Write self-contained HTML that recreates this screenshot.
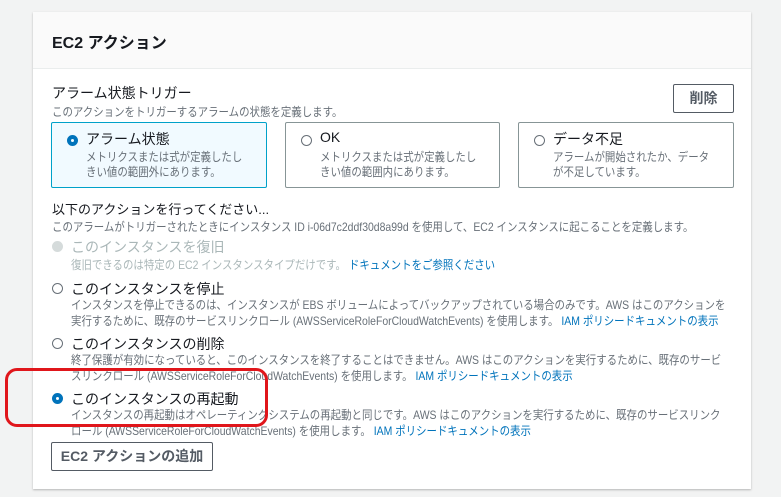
<!DOCTYPE html>
<html><head><meta charset="utf-8"><style>
body{margin:0;width:781px;height:497px;background:#f2f3f3;font-family:"Liberation Sans","Noto Sans CJK JP",sans-serif;position:relative;overflow:hidden;color:#16191f}
.panel{position:absolute;left:33px;top:12px;width:718px;height:477px;background:#fff;box-shadow:0 1px 2px rgba(0,0,0,.25)}
.hdr{position:absolute;left:0;top:0;width:718px;height:56px;background:#fafafa;border-bottom:1px solid #eaeded}
.a{position:absolute;white-space:nowrap}
.s{font-size:12px;color:#687078;transform:scaleX(0.87);transform-origin:left top}
.l{color:#0073bb}
.card{position:absolute;top:110px;height:66px;border:1px solid #879596;border-radius:2px;box-sizing:border-box}
.r{position:absolute;width:11px;height:11px;border:1px solid #687078;border-radius:50%;box-sizing:border-box}
.r.on{border:4px solid #0073bb}
.btn{position:absolute;border:1px solid #545b64;border-radius:2px;font-size:14px;font-weight:bold;color:#545b64;text-align:center;box-sizing:border-box}
</style></head><body>
<div class="panel">
<div class="hdr"><div class="a" style="left:19px;top:17px;font-size:16px;font-weight:bold">EC2 アクション</div></div>
<div class="a" style="left:19px;top:71px;font-size:14px">アラーム状態トリガー</div>
<div class="a s" style="left:19px;top:91px">このアクションをトリガーするアラームの状態を定義します。</div>
<div class="btn" style="left:640px;top:72px;width:61px;height:29px;line-height:27px">削除</div>
<div class="card" style="left:18px;width:216px;background:#f1faff;border-color:#00a1c9">
 <div class="r on" style="left:15px;top:12px"></div>
 <div class="a" style="left:34px;top:6px;font-size:14px">アラーム状態</div>
 <div class="a s" style="left:34px;top:27px;line-height:15px">メトリクスまたは式が定義したし<br>きい値の範囲外にあります。</div>
</div>
<div class="card" style="left:252px;width:215px">
 <div class="r" style="left:15px;top:12px"></div>
 <div class="a" style="left:34px;top:6px;font-size:14px">OK</div>
 <div class="a s" style="left:34px;top:27px;line-height:15px">メトリクスまたは式が定義したし<br>きい値の範囲内にあります。</div>
</div>
<div class="card" style="left:485px;width:216px">
 <div class="r" style="left:15px;top:12px"></div>
 <div class="a" style="left:34px;top:6px;font-size:14px">データ不足</div>
 <div class="a s" style="left:34px;top:27px;line-height:15px">アラームが開始されたか、データ<br>が不足しています。</div>
</div>
<div class="a" style="left:19px;top:187px;font-size:13px">以下のアクションを行ってください...</div>
<div class="a s" style="left:19px;top:206px">このアラームがトリガーされたときにインスタンス ID i-06d7c2ddf30d8a99d を使用して、EC2 インスタンスに起こることを定義します。</div>

<div class="r" style="left:19px;top:229px;background:#d5dbdb;border-color:#d5dbdb"></div>
<div class="a" style="left:38px;top:225px;font-size:14px;color:#aab7b8">このインスタンスを復旧</div>
<div class="a s" style="left:38px;top:244px"><span style="color:#aab7b8">復旧できるのは特定の EC2 インスタンスタイプだけです。</span> <span class="l">ドキュメントをご参照ください</span></div>

<div class="r" style="left:19px;top:271px"></div>
<div class="a" style="left:38px;top:267px;font-size:14px">このインスタンスを停止</div>
<div class="a s" style="left:38px;top:285px;line-height:16px">インスタンスを停止できるのは、インスタンスが EBS ボリュームによってバックアップされている場合のみです。AWS はこのアクションを<br>実行するために、既存のサービスリンクロール (AWSServiceRoleForCloudWatchEvents) を使用します。 <span class="l">IAM ポリシードキュメントの表示</span></div>

<div class="r" style="left:19px;top:326px"></div>
<div class="a" style="left:38px;top:322px;font-size:14px">このインスタンスの削除</div>
<div class="a s" style="left:38px;top:340px;line-height:16px">終了保護が有効になっていると、このインスタンスを終了することはできません。AWS はこのアクションを実行するために、既存のサービ<br>スリンクロール (AWSServiceRoleForCloudWatchEvents) を使用します。 <span class="l">IAM ポリシードキュメントの表示</span></div>

<div class="r on" style="left:19px;top:381px"></div>
<div class="a" style="left:38px;top:377px;font-size:14px">このインスタンスの再起動</div>
<div class="a s" style="left:38px;top:395px;line-height:16px">インスタンスの再起動はオペレーティングシステムの再起動と同じです。AWS はこのアクションを実行するために、既存のサービスリンク<br>ロール (AWSServiceRoleForCloudWatchEvents) を使用します。 <span class="l">IAM ポリシードキュメントの表示</span></div>

<div class="btn" style="left:18px;top:430px;width:162px;height:29px;line-height:27px">EC2 アクションの追加</div>
</div>
<div style="position:absolute;left:5px;top:368px;width:263px;height:59px;border:3px solid #e0161b;border-radius:12px;box-sizing:border-box"></div>
</body></html>
